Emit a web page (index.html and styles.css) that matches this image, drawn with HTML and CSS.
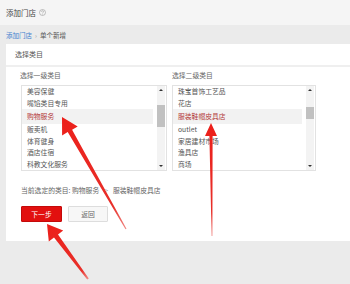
FILE: index.html
```html
<!DOCTYPE html>
<html lang="zh">
<head>
<meta charset="utf-8">
<title>添加门店</title>
<link rel="stylesheet" href="styles.css">
</head>
<body>
<div class="page">
  <div class="top">
    <span class="title">添加门店</span>
    <svg class="help" width="7" height="7" viewBox="0 0 14 14"><circle cx="7" cy="7" r="6" fill="none" stroke="#999" stroke-width="1.2"/><path d="M5 5.5a2 2 0 1 1 2.6 1.9c-.5.2-.6.5-.6 1.1" fill="none" stroke="#999" stroke-width="1.2"/><circle cx="7" cy="10.3" r=".8" fill="#999"/></svg>
  </div>
  <div class="crumb"><a class="link">添加门店</a><span class="sep">›</span><span>单个新增</span></div>
  <div class="card">
    <div class="card-head">选择类目</div>
    <div class="card-body">
      <div class="cols">
        <div class="col col-left">
          <div class="label">选择一级类目</div>
          <div class="box">
            <ul class="list">
              <li>美容保健</li>
              <li>嘴馅类目专用</li>
              <li class="on">购物服务</li>
              <li>贩卖机</li>
              <li>体育健身</li>
              <li>酒店住宿</li>
              <li>科教文化服务</li>
            </ul>
            <div class="sb"><span class="up"></span><span class="thumb t1"></span><span class="down"></span></div>
          </div>
        </div>
        <div class="col col-right">
          <div class="label">选择二级类目</div>
          <div class="box">
            <ul class="list">
              <li>珠宝首饰工艺品</li>
              <li>花店</li>
              <li class="on">服装鞋帽皮具店</li>
              <li>outlet</li>
              <li>家居建材市场</li>
              <li>渔具店</li>
              <li>商场</li>
            </ul>
            <div class="sb"><span class="up"></span><span class="thumb t2"></span><span class="down"></span></div>
          </div>
        </div>
      </div>
      <div class="current">当前选定的类目: 购物服务<span class="gt">&gt;</span>服装鞋帽皮具店</div>
      <div class="actions">
        <button class="btn primary">下一步</button>
        <button class="btn">返回</button>
      </div>
    </div>
  </div>
  <svg class="arrows" width="350" height="284" viewBox="0 0 350 284">
    <defs>
      <linearGradient id="g1" x1="62" y1="117" x2="126" y2="229" gradientUnits="userSpaceOnUse">
        <stop offset="0" stop-color="#ec1f1a"/><stop offset="0.8" stop-color="#e8302a"/><stop offset="1" stop-color="#f08a86"/>
      </linearGradient>
      <linearGradient id="g2" x1="211" y1="123" x2="212" y2="236" gradientUnits="userSpaceOnUse">
        <stop offset="0" stop-color="#ec1f1a"/><stop offset="0.8" stop-color="#e8302a"/><stop offset="1" stop-color="#f08a86"/>
      </linearGradient>
      <linearGradient id="g3" x1="47" y1="224" x2="88" y2="279" gradientUnits="userSpaceOnUse">
        <stop offset="0" stop-color="#ec1f1a"/><stop offset="0.85" stop-color="#e8302a"/><stop offset="1" stop-color="#f08a86"/>
      </linearGradient>
    </defs>
    <polygon fill="url(#g1)" points="62,117 77.7,126.4 72.1,129.7 126.5,228.7 125.5,229.3 67.7,132.1 62.1,135.4"/>
    <polygon fill="url(#g2)" points="211,123 217,136 212.6,136 212.4,236 211.6,236 209.4,136 205,136"/>
    <polygon fill="url(#g3)" points="47,224 63.2,230.6 58,234.5 88.8,278.4 87.2,279.6 54,237.5 48.8,241.4"/>
  </svg>
</div>
</body>
</html>
```

FILE: styles.css
```css
* { box-sizing: border-box; }
html, body { margin: 0; padding: 0; }
body {
  background: #ebebeb;
  font-family: "Noto Sans CJK SC", "Noto Sans", sans-serif;
  color: #555;
  width: 350px;
  height: 284px;
  overflow: hidden;
}
.page { position: relative; width: 350px; height: 284px; }
.top {
  height: 25px;
  background: #f5f5f5;
  padding-left: 6px;
  display: flex;
  align-items: center;
  gap: 3px;
}
.title { font-size: 7.5px; color: #444; }
.help { display: block; }
.crumb {
  height: 19px;
  padding-left: 6px;
  display: flex;
  align-items: center;
  font-size: 6.5px;
  color: #555;
}
.link { color: #3d7fcf; }
.sep { margin: 0 3px; color: #999; }
.card {
  margin-left: 6px;
  height: 197px;
  background: #fff;
}
.card-head {
  height: 23px;
  padding: 0 0 2px 9px;
  border-bottom: 2px solid #efefef;
  display: flex;
  align-items: center;
  font-size: 7px;
  color: #555;
}
.card-body { padding: 0 0 0 15px; }
.cols { display: flex; gap: 5px; }
.col-left { width: 146px; }
.col-right { width: 144px; }
.label {
  height: 16px;
  line-height: 16px;
  margin-bottom: 2px;
  font-size: 6.8px;
  color: #666;
}
.col-left .label { margin-left: -1px; }
.box {
  height: 86px;
  border: 1px solid #e2e2e2;
  display: flex;
}
.list {
  list-style: none;
  margin: 0 4px 0 0;
  padding: 0;
  flex: 1;
  font-size: 6.8px;
  color: #555;
}
.list li {
  height: 11.5px;
  line-height: 11.5px;
  padding-left: 5px;
  white-space: nowrap;
}
.list li.on {
  height: 15px;
  line-height: 15px;
  background: #f2f2f2;
  color: #b33a3a;
}
.sb {
  width: 8px;
  margin-right: 1px;
  background: #f3f3f3;
  position: relative;
}
.up, .down {
  position: absolute;
  left: 2px;
  width: 0;
  height: 0;
  border-left: 2px solid transparent;
  border-right: 2px solid transparent;
}
.up { top: 3px; border-bottom: 2px solid #333; }
.down { bottom: 3px; border-top: 2px solid #333; }
.thumb {
  position: absolute;
  left: 0;
  width: 8px;
  background: #c1c1c1;
}
.t1 { top: 19px; height: 22px; }
.t2 { top: 21px; height: 12px; }
.current {
  margin-top: 13px;
  height: 12px;
  line-height: 12px;
  font-size: 6.8px;
  color: #666;
}
.gt { margin: 0 5px; color: #999; }
.actions {
  margin-top: 10px;
  display: flex;
  gap: 6px;
}
.btn {
  width: 40px;
  height: 16px;
  padding: 0;
  font-family: inherit;
  font-size: 6.8px;
  border: 1px solid #ddd;
  background: #f7f7f7;
  color: #666;
  border-radius: 1px;
}
.btn.primary {
  width: 41px;
  background: #e2100f;
  border-color: #c40a0a;
  color: #fff;
}
.arrows { position: absolute; left: 0; top: 0; pointer-events: none; }
```
